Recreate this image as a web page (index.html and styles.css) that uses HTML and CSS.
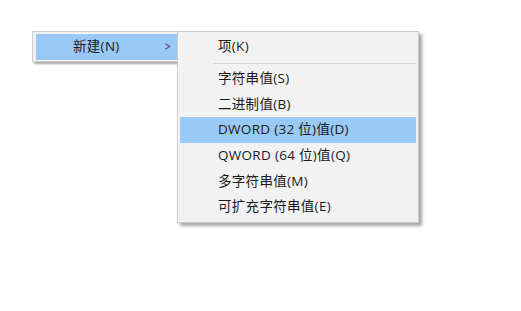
FILE: index.html
```html
<!DOCTYPE html>
<html lang="zh-CN">
<head>
<meta charset="utf-8">
<title>新建</title>
<link rel="stylesheet" href="styles.css">
</head>
<body>
<div class="stage">
  <div class="menu">
    <div class="item hover">
      <span class="label">新建(N)</span>
      <span class="arrow">&gt;</span>
    </div>
    <div class="submenu">
      <div class="sitem">项(K)</div>
      <div class="sep"></div>
      <div class="sitem">字符串值(S)</div>
      <div class="sitem">二进制值(B)</div>
      <div class="sitem hover">DWORD (32 位)值(D)</div>
      <div class="sitem">QWORD (64 位)值(Q)</div>
      <div class="sitem">多字符串值(M)</div>
      <div class="sitem">可扩充字符串值(E)</div>
    </div>
  </div>
</div>
</body>
</html>
```
FILE: styles.css
```css
html, body {
  margin: 0;
  padding: 0;
  background: #ffffff;
}
body {
  width: 521px;
  height: 311px;
  overflow: hidden;
  font-family: "Open Sans", "Noto Sans CJK SC", sans-serif;
  font-size: 13.5px;
  letter-spacing: 0.3px;
  color: #1a1a1a;
}
.stage {
  padding: 31px 0 0 32px;
}
.menu {
  position: relative;
  width: 148px;
  background: #f2f2f2;
  border: 1px solid #cfcfcf;
  padding: 2px 0 1px 3px;
  box-shadow: 2px 2px 2px rgba(0, 0, 0, 0.35);
}
.item {
  height: 26px;
  display: flex;
  align-items: center;
  padding-left: 37px;
}
.hover {
  background: #99c9f5;
}
.item .label {
  width: 91px;
  line-height: 26px;
  margin-top: -2px;
}
.arrow {
  font-size: 13px;
  line-height: 26px;
  margin-top: -2px;
  color: #333;
  transform: scaleX(0.8);
}
.submenu {
  position: absolute;
  left: 144px;
  top: -1px;
  width: 236px;
  background: #f2f2f2;
  border: 1px solid #cccccc;
  padding: 1.5px 2px 2px 2px;
  box-shadow: 3px 3px 3px rgba(0, 0, 0, 0.35);
}
.sitem {
  height: 25.6px;
  line-height: 25.6px;
  padding-left: 38px;
  white-space: nowrap;
}
.sep {
  height: 7.2px;
  margin-left: 33px;
  background: linear-gradient(#d6d6d6, #d6d6d6) no-repeat 0 4px / 100% 1px;
}
```
